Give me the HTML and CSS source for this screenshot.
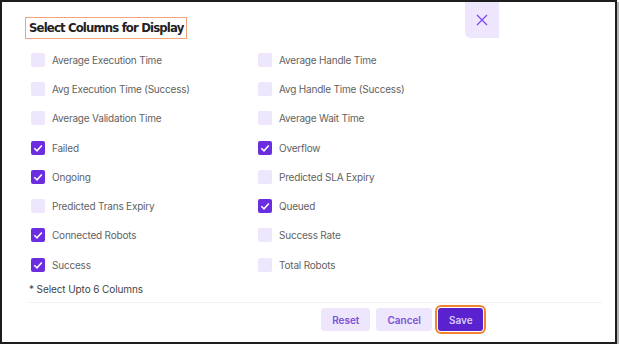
FILE: index.html
```html
<!DOCTYPE html>
<html>

<head>
  <title>Select Columns</title>
  <link rel="stylesheet" href="styles.css">
</head>

<body>
  <div class="modal">
    <div class="modal-header">
      <h2 class="modal-title">Select Columns for Display</h2>
      <button class="close-btn" aria-label="Close">
        <svg width="12" height="12" viewBox="0 0 12 12">
          <path d="M1 1 L11 11 M11 1 L1 11" stroke="#8148ec" stroke-width="1.3" fill="none" />
        </svg>
      </button>
    </div>

    <div class="column-list">
      <label class="column-item"><span class="check"></span>Average Execution Time</label>
      <label class="column-item"><span class="check"></span>Average Handle Time</label>
      <label class="column-item"><span class="check"></span>Avg Execution Time (Success)</label>
      <label class="column-item"><span class="check"></span>Avg Handle Time (Success)</label>
      <label class="column-item"><span class="check"></span>Average Validation Time</label>
      <label class="column-item"><span class="check"></span>Average Wait Time</label>
      <label class="column-item"><span class="check checked"></span>Failed</label>
      <label class="column-item"><span class="check checked"></span>Overflow</label>
      <label class="column-item"><span class="check checked"></span>Ongoing</label>
      <label class="column-item"><span class="check"></span>Predicted SLA Expiry</label>
      <label class="column-item"><span class="check"></span>Predicted Trans Expiry</label>
      <label class="column-item"><span class="check checked"></span>Queued</label>
      <label class="column-item"><span class="check checked"></span>Connected Robots</label>
      <label class="column-item"><span class="check"></span>Success Rate</label>
      <label class="column-item"><span class="check checked"></span>Success</label>
      <label class="column-item"><span class="check"></span>Total Robots</label>
    </div>

    <p class="note">* Select Upto 6 Columns</p>

    <div class="modal-footer">
      <button class="btn btn-light">Reset</button>
      <button class="btn btn-light">Cancel</button>
      <button class="btn btn-primary">Save</button>
    </div>
  </div>
</body>

</html>
```

FILE: styles.css
```css
body {
  margin: 0;
  padding: 0;
  background-color: #fff;
  font-family: Inter, "Liberation Sans", sans-serif;
}

.modal {
  width: 613px;
  height: 340px;
  border: 2px solid #1d1d1d;
  box-shadow: 2px 2px 0 #b4b4b4;
  background-color: #fff;
}

.modal-header {
  display: flex;
  justify-content: space-between;
  align-items: flex-start;
  height: 38px;
  padding: 0 116px 0 23px;
}

.modal-title {
  margin: 15px 0 0 0;
  padding: 0 3px;
  height: 20px;
  line-height: 20px;
  border: 1px solid #f3a37c;
  font-family: "DejaVu Sans Condensed", "Liberation Sans", sans-serif;
  font-stretch: condensed;
  font-size: 13px;
  font-weight: bold;
  letter-spacing: -0.85px;
  color: #222;
}

.close-btn {
  display: flex;
  align-items: center;
  justify-content: center;
  width: 34px;
  height: 36px;
  padding: 0;
  border: none;
  border-radius: 0 0 0 6px;
  background-color: #eee6fc;
}

.column-list {
  display: grid;
  grid-template-columns: 227px 227px;
  grid-auto-rows: 29.3px;
  margin-top: 5px;
  padding-left: 29px;
}

.column-item {
  display: flex;
  align-items: center;
  gap: 7px;
  font-size: 10px;
  letter-spacing: -0.2px;
  color: #626262;
}

.check {
  width: 14px;
  height: 14px;
  border-radius: 2px;
  background-color: #eee6fc;
}

.check.checked {
  background-color: #6a2ee0;
  background-image: url("data:image/svg+xml,%3Csvg xmlns='http://www.w3.org/2000/svg' width='14' height='14'%3E%3Cpath d='M3.3 7.2 L6 9.8 L10.8 4.4' stroke='white' stroke-width='1.5' fill='none'/%3E%3C/svg%3E");
}

.note {
  margin: 4px 0 0 0;
  padding: 0 0 0 27px;
  font-size: 10px;
  line-height: 12px;
  letter-spacing: -0.1px;
  color: #444;
}

.modal-footer {
  display: flex;
  justify-content: flex-end;
  gap: 6px;
  margin: 7px 13px 0 26px;
  padding: 5px 119px 0 0;
  border-top: 1px solid #f2f2f2;
}

.btn {
  height: 23px;
  padding: 0 11px;
  border: none;
  border-radius: 3px;
  font-family: Inter, "Liberation Sans", sans-serif;
  font-size: 10px;
  font-weight: 600;
}

.btn-light {
  background-color: #eee6fc;
  color: #7a52d6;
}

.btn-primary {
  width: 45px;
  background-color: #5a22cf;
  color: #d9cdf7;
  outline: 2px solid #f2842e;
  outline-offset: 1px;
}
```
